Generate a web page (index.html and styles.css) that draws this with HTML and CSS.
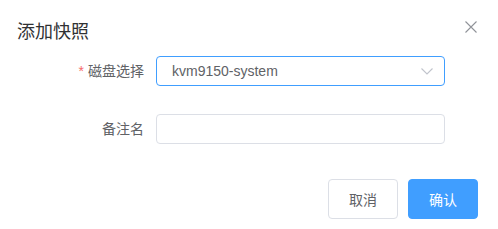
FILE: index.html
```html
<!doctype html>
<html lang="zh-CN">
<head>
    <meta charset="UTF-8">
    <title>添加快照</title>
    <link rel="stylesheet" href="styles.css">
</head>
<body>
<div class="dialog">
    <div class="dialog-header">
        <span class="dialog-title">添加快照</span>
        <button class="dialog-close" type="button">
            <svg width="12" height="12" viewBox="0 0 12 12">
                <path d="M0.5 0.5 L11.5 11.5 M11.5 0.5 L0.5 11.5" stroke="#909399" stroke-width="1.1" fill="none"/>
            </svg>
        </button>
    </div>
    <div class="dialog-body">
        <div class="form-item">
            <label class="form-label required">磁盘选择</label>
            <div class="form-content">
                <div class="select is-focus">
                    <span class="select-value">kvm9150-system</span>
                    <svg class="select-arrow" width="12" height="7" viewBox="0 0 12 7">
                        <path d="M0.5 0.5 L6 6 L11.5 0.5" stroke="#C0C4CC" stroke-width="1.1" fill="none"/>
                    </svg>
                </div>
            </div>
        </div>
        <div class="form-item">
            <label class="form-label">备注名</label>
            <div class="form-content">
                <input class="input" type="text">
            </div>
        </div>
    </div>
    <div class="dialog-footer">
        <button class="btn" type="button">取消</button>
        <button class="btn btn-primary" type="button">确认</button>
    </div>
</div>
</body>
</html>
```

FILE: styles.css
```css
*{
    padding: 0;
    margin: 0;
    box-sizing: border-box;
}
body{
    font-family: "Liberation Sans", "Noto Sans CJK SC", sans-serif;
    background-color: #fff;
    color: #606266;
}
.dialog{
    width: 498px;
    height: 229px;
    background-color: #fff;
    position: relative;
}
.dialog-header{
    padding: 20px 20px 10px 17px;
}
.dialog-title{
    display: block;
    font-size: 18px;
    line-height: 24px;
    color: #303133;
}
.dialog-close{
    position: absolute;
    top: 21px;
    right: 21px;
    width: 12px;
    height: 12px;
    border: none;
    background: none;
    display: flex;
}
.dialog-body{
    padding: 2px 20px 0;
}
.form-item{
    display: flex;
    margin-bottom: 28px;
}
.form-item:last-child{
    margin-bottom: 0;
}
.form-label{
    width: 136px;
    padding-right: 12px;
    text-align: right;
    font-size: 14px;
    line-height: 30px;
    color: #606266;
}
.form-label.required::before{
    content: "*";
    color: #F56C6C;
    margin-right: 4px;
}
.form-content{
    width: 289px;
}
.select{
    height: 30px;
    border: 1px solid #DCDFE6;
    border-radius: 4px;
    padding: 0 11px 0 15px;
    display: flex;
    align-items: center;
    justify-content: space-between;
}
.select.is-focus{
    border-color: #409EFF;
}
.select-value{
    font-size: 14px;
    color: #606266;
}
.input{
    display: block;
    width: 100%;
    height: 30px;
    border: 1px solid #DCDFE6;
    border-radius: 4px;
    padding: 0 15px;
    outline: none;
    font-size: 14px;
}
.dialog-footer{
    padding: 35px 20px 10px;
    display: flex;
    justify-content: flex-end;
    gap: 10px;
}
.btn{
    width: 70px;
    height: 40px;
    border: 1px solid #DCDFE6;
    border-radius: 4px;
    background-color: #fff;
    color: #606266;
    font-family: "Liberation Sans", "Noto Sans CJK SC", sans-serif;
    font-size: 14px;
}
.btn-primary{
    background-color: #409EFF;
    border-color: #409EFF;
    color: #fff;
}
```
